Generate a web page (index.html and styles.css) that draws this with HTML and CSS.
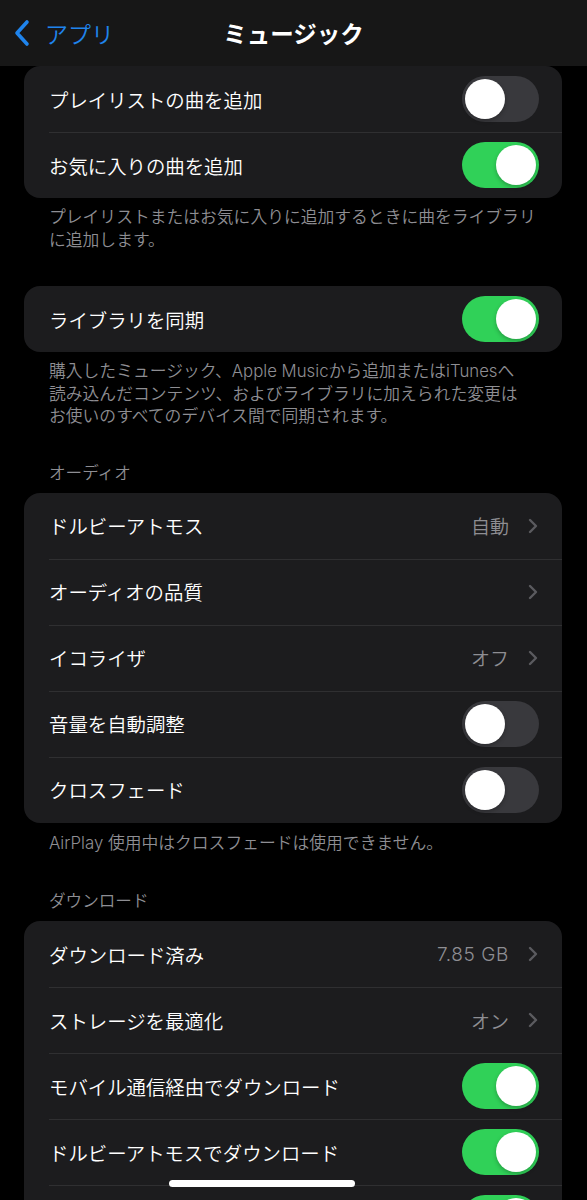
FILE: index.html
```html
<!DOCTYPE html>
<html lang="ja">
<head>
	<meta charset="utf-8">
	<title>ミュージック</title>
	<link rel="stylesheet" href="styles.css">
</head>
<body>
	<div class="navbar">
		<div class="back">
			<svg class="back-icon" width="18" height="28" viewBox="0 0 18 28">
				<polyline points="14,3 4,14 14,25" fill="none" stroke="#1f84ec" stroke-width="3.6" stroke-linecap="round" stroke-linejoin="round"/>
			</svg>
			<span>アプリ</span>
		</div>
		<div class="title">ミュージック</div>
		<div></div>
	</div>

	<div class="content">
		<div class="card">
			<div class="row">
				<span class="label">プレイリストの曲を追加</span>
				<span class="switch"></span>
			</div>
			<div class="row">
				<span class="label">お気に入りの曲を追加</span>
				<span class="switch on"></span>
			</div>
		</div>
		<p class="footer">プレイリストまたはお気に入りに追加するときに曲をライブラリ<br>に追加します。</p>

		<div class="card">
			<div class="row">
				<span class="label">ライブラリを同期</span>
				<span class="switch on"></span>
			</div>
		</div>
		<p class="footer">購入したミュージック、Apple Musicから追加またはiTunesへ<br>読み込んだコンテンツ、およびライブラリに加えられた変更は<br>お使いのすべてのデバイス間で同期されます。</p>

		<h2 class="section">オーディオ</h2>
		<div class="card">
			<div class="row">
				<span class="label">ドルビーアトモス</span>
				<span class="value">自動</span>
				<svg class="chevron" width="10" height="16" viewBox="0 0 10 16"><polyline points="2,2 8,8 2,14"/></svg>
			</div>
			<div class="row">
				<span class="label">オーディオの品質</span>
				<svg class="chevron" width="10" height="16" viewBox="0 0 10 16"><polyline points="2,2 8,8 2,14"/></svg>
			</div>
			<div class="row">
				<span class="label">イコライザ</span>
				<span class="value">オフ</span>
				<svg class="chevron" width="10" height="16" viewBox="0 0 10 16"><polyline points="2,2 8,8 2,14"/></svg>
			</div>
			<div class="row">
				<span class="label">音量を自動調整</span>
				<span class="switch"></span>
			</div>
			<div class="row">
				<span class="label">クロスフェード</span>
				<span class="switch"></span>
			</div>
		</div>
		<p class="footer single">AirPlay 使用中はクロスフェードは使用できません。</p>

		<h2 class="section">ダウンロード</h2>
		<div class="card">
			<div class="row">
				<span class="label">ダウンロード済み</span>
				<span class="value latin">7.85 GB</span>
				<svg class="chevron" width="10" height="16" viewBox="0 0 10 16"><polyline points="2,2 8,8 2,14"/></svg>
			</div>
			<div class="row">
				<span class="label">ストレージを最適化</span>
				<span class="value">オン</span>
				<svg class="chevron" width="10" height="16" viewBox="0 0 10 16"><polyline points="2,2 8,8 2,14"/></svg>
			</div>
			<div class="row">
				<span class="label">モバイル通信経由でダウンロード</span>
				<span class="switch on"></span>
			</div>
			<div class="row">
				<span class="label">ドルビーアトモスでダウンロード</span>
				<span class="switch on"></span>
			</div>
			<div class="row">
				<span class="label"></span>
				<span class="switch on"></span>
			</div>
		</div>
	</div>

	<div class="home-indicator"></div>
</body>
</html>
```

FILE: styles.css
```css
body {
	margin: 0;
	background-color: #000;
	color: #fff;
	font-family: Inter, "Noto Sans CJK JP", sans-serif;
	font-weight: 350;
	height: 1200px;
	overflow: hidden;
	position: relative;
}

.navbar {
	height: 66px;
	background-color: #171717;
	display: grid;
	grid-template-columns: 1fr auto 1fr;
	align-items: center;
}

.back {
	display: flex;
	align-items: center;
	gap: 14px;
	padding-left: 13px;
	color: #1f84ec;
	font-size: 23px;
}

.back-icon {
	margin-top: -1px;
}

.title {
	font-size: 23.5px;
	font-weight: bold;
}

.content {
	padding: 0 25px 0 24px;
}

.card {
	background-color: #1c1c1e;
	border-radius: 16px;
	overflow: hidden;
}

.row {
	height: 66px;
	display: flex;
	align-items: center;
	padding: 0 23px 0 25px;
	position: relative;
}

.row + .row::before {
	content: "";
	position: absolute;
	top: 0;
	left: 25px;
	right: 0;
	height: 1px;
	background-color: #2f2f31;
}

.label {
	flex: 1;
	font-size: 19.4px;
}

.value {
	font-size: 19px;
	color: #8e8e93;
	margin-right: 19px;
}

.value.latin {
	letter-spacing: 0.6px;
}

.chevron {
	fill: none;
	stroke: #5b5b5f;
	stroke-width: 2.4;
	stroke-linecap: round;
	stroke-linejoin: round;
	margin-right: 1px;
}

.switch {
	width: 77px;
	height: 46px;
	border-radius: 23px;
	background-color: #39393d;
	position: relative;
}

.switch::after {
	content: "";
	position: absolute;
	top: 3px;
	left: 3px;
	width: 40px;
	height: 40px;
	border-radius: 50%;
	background-color: #fff;
	box-shadow: 0 2px 4px rgba(0, 0, 0, 0.25);
}

.switch.on {
	background-color: #30d158;
}

.switch.on::after {
	left: 34px;
}

.footer {
	margin: 8px 0 35px;
	padding: 0 25px;
	font-size: 16.8px;
	line-height: 22.5px;
	color: #8e8e93;
	white-space: nowrap;
}

.footer.single {
	margin: 9px 0 37px;
}

.section {
	margin: 0 0 10px;
	padding: 0 25px;
	font-size: 16.6px;
	line-height: 20px;
	font-weight: 350;
	color: #8e8e93;
}

.home-indicator {
	position: absolute;
	left: 169px;
	top: 1180px;
	width: 186px;
	height: 7px;
	border-radius: 4px;
	background-color: #fff;
}
```
